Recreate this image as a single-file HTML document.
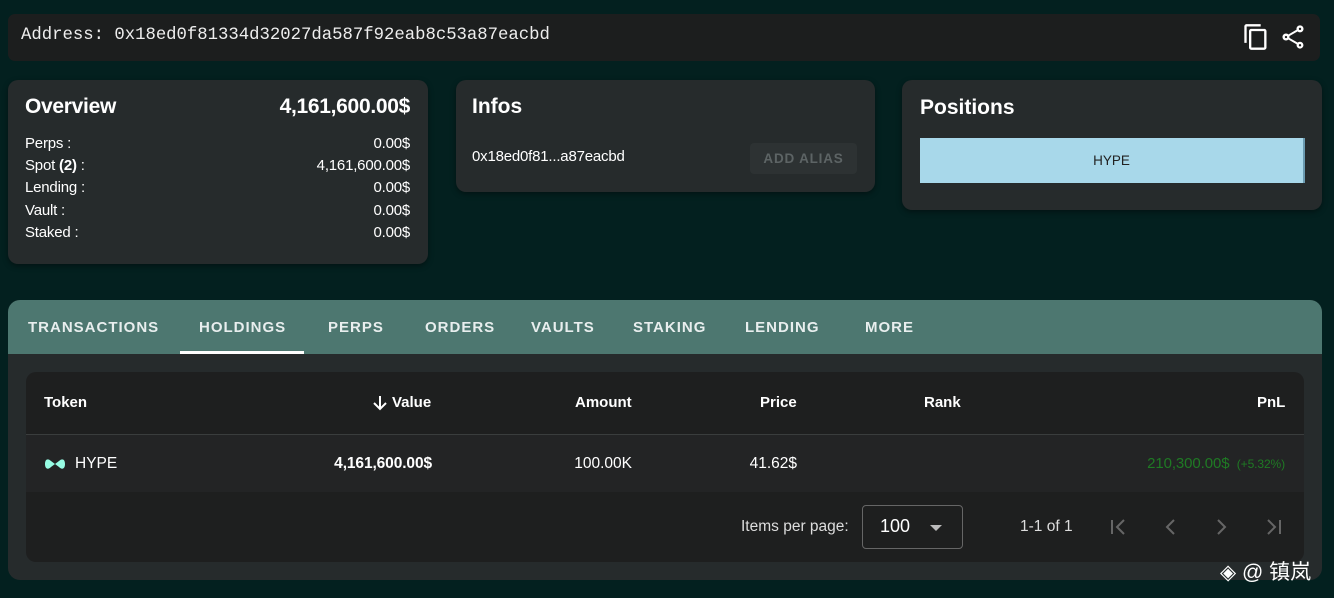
<!DOCTYPE html>
<html><head><meta charset="utf-8"><style>
*{box-sizing:border-box;margin:0;padding:0}
body{width:1334px;height:598px;background:#03201f;font-family:"Liberation Sans",sans-serif;color:#fff;position:relative;overflow:hidden}
.abs{position:absolute}
.card{position:absolute;background:#262b2c;border-radius:10px;box-shadow:0 2px 6px rgba(0,0,0,.4)}
.row{position:absolute;left:17px;right:18px;font-size:15px;display:flex;justify-content:space-between;letter-spacing:-.2px}
.tab{position:absolute;top:319px;font-size:15px;font-weight:bold;letter-spacing:1px;color:#e8eeee}
.th{position:absolute;top:394px;font-size:15px;font-weight:bold}
</style></head><body>
<div class="abs" style="left:8px;top:14px;width:1312px;height:47px;background:#1c1e1e;border-radius:7px"></div>
<div class="abs" style="left:21px;top:26px;font-family:'Liberation Mono',monospace;font-size:17.3px;color:#eee">Address: 0x18ed0f81334d32027da587f92eab8c53a87eacbd</div>
<svg class="abs" style="left:1242px;top:23px" width="28" height="28" viewBox="0 0 24 24" fill="#fff"><path d="M16 1H4c-1.1 0-2 .9-2 2v14h2V3h12V1zm3 4H8c-1.1 0-2 .9-2 2v14c0 1.1.9 2 2 2h11c1.1 0 2-.9 2-2V7c0-1.1-.9-2-2-2zm0 16H8V7h11v14z"/></svg>
<svg class="abs" style="left:1279px;top:23px" width="28" height="28" viewBox="0 0 24 24" fill="#fff"><path d="M18 16.08c-.76 0-1.44.3-1.960.77L8.910 12.7c.05-.23.09-.46.09-.7s-.04-.47-.09-.7l7.050-4.110c.54.5 1.250.81 2.040.81 1.660 0 3-1.340 3-3s-1.340-3-3-3-3 1.340-3 3c0 .24.04.47.09.7L8.040 9.810C7.5 9.310 6.790 9 6 9c-1.660 0-3 1.340-3 3s1.340 3 3 3c.79 0 1.5-.31 2.040-.81l7.120 4.160c-.05.21-.08.43-.08.65 0 1.610 1.310 2.920 2.920 2.920s2.920-1.310 2.920-2.920-1.310-2.920-2.920-2.920zM18 4c.55 0 1 .45 1 1s-.45 1-1 1-1-.45-1-1 .45-1 1-1zM6 13c-.55 0-1-.45-1-1s.45-1 1-1 1 .45 1 1-.45 1-1 1zm12 7.020c-.55 0-1-.45-1-1s.45-1 1-1 1 .45 1 1-.45 1-1 1z"/></svg>

<div class="card" style="left:8px;top:80px;width:420px;height:184px">
  <div class="abs" style="left:17px;top:15px;font-size:21px;font-weight:bold;letter-spacing:-.3px">Overview</div>
  <div class="abs" style="right:18px;top:15px;font-size:21px;font-weight:bold;letter-spacing:-.3px">4,161,600.00$</div>
  <div class="row" style="top:55px"><span>Perps :</span><span>0.00$</span></div>
  <div class="row" style="top:77px"><span>Spot <b>(2)</b> :</span><span>4,161,600.00$</span></div>
  <div class="row" style="top:99px"><span>Lending :</span><span>0.00$</span></div>
  <div class="row" style="top:122px"><span>Vault :</span><span>0.00$</span></div>
  <div class="row" style="top:144px"><span>Staked :</span><span>0.00$</span></div>
</div>
<div class="card" style="left:456px;top:80px;width:419px;height:112px">
  <div class="abs" style="left:16px;top:15px;font-size:21px;font-weight:bold">Infos</div>
  <div class="abs" style="left:16px;top:68px;font-size:15px;letter-spacing:-.2px">0x18ed0f81...a87eacbd</div>
  <div class="abs" style="left:294px;top:63px;width:107px;height:31px;background:#2d3233;border-radius:4px;color:#5d6465;font-size:13.5px;font-weight:bold;letter-spacing:.8px;text-align:center;line-height:31px">ADD ALIAS</div>
</div>
<div class="card" style="left:902px;top:80px;width:420px;height:130px">
  <div class="abs" style="left:18px;top:16px;font-size:21px;font-weight:bold">Positions</div>
  <div class="abs" style="left:18px;top:58px;width:385px;height:45px;background:#a8d8ea;color:#222;font-size:13.5px;text-align:center;line-height:45px;border-right:2px solid #6a9ab0">HYPE</div>
</div>

<div class="abs" style="left:8px;top:300px;width:1314px;height:280px;background:#262b2c;border-radius:12px;overflow:hidden">
  <div class="abs" style="left:0;top:0;width:1314px;height:54px;background:#4d7770"></div>
  <div class="abs" style="left:172px;top:51px;width:124px;height:3px;background:#fff"></div>
  <div class="abs" style="left:18px;top:72px;width:1278px;height:190px;background:#1e1f1f;border-radius:10px;overflow:hidden">
    <div class="abs" style="left:0;top:62px;width:1278px;height:1px;background:#3a3d3d"></div>
    <div class="abs" style="left:0;top:63px;width:1278px;height:57px;background:#232425"></div>
  </div>
</div>
<div class="tab" style="left:28px">TRANSACTIONS</div>
<div class="tab" style="left:199px">HOLDINGS</div>
<div class="tab" style="left:328px">PERPS</div>
<div class="tab" style="left:425px">ORDERS</div>
<div class="tab" style="left:531px">VAULTS</div>
<div class="tab" style="left:633px">STAKING</div>
<div class="tab" style="left:745px">LENDING</div>
<div class="tab" style="left:865px">MORE</div>

<div class="th" style="left:44px">Token</div>
<svg class="abs" style="left:371px;top:394px" width="18" height="18" viewBox="0 0 18 18"><path d="M9 2v13M3 9l6 6 6-6" stroke="#fff" stroke-width="2" fill="none"/></svg>
<div class="th" style="left:392px">Value</div>
<div class="th" style="left:575px">Amount</div>
<div class="th" style="left:760px">Price</div>
<div class="th" style="left:924px">Rank</div>
<div class="th" style="left:1257px">PnL</div>

<svg class="abs" style="left:44px;top:457px" width="22" height="14" viewBox="0 0 22 14"><path d="M1 7C1 2 4 1 7 4L11 7 15 4C18 1 21 2 21 7 21 12 18 13 15 10L11 7 7 10C4 13 1 12 1 7Z" fill="#97fce4"/></svg>
<div class="abs" style="left:75px;top:455px;font-size:15.5px">HYPE</div>
<div class="abs" style="right:902px;top:455px;font-size:15.5px;font-weight:bold;letter-spacing:-.1px">4,161,600.00$</div>
<div class="abs" style="right:702px;top:455px;font-size:15.5px">100.00K</div>
<div class="abs" style="right:537px;top:455px;font-size:15.5px">41.62$</div>
<div class="abs" style="right:49px;top:455px;font-size:15px;color:#1f7a24;letter-spacing:-.1px">210,300.00$ <span style="font-size:12px">&nbsp;(+5.32%)</span></div>

<div class="abs" style="left:741px;top:518px;font-size:15.5px;color:#ddd">Items per page:</div>
<div class="abs" style="left:862px;top:505px;width:101px;height:44px;border:1px solid #666;border-radius:4px"></div>
<div class="abs" style="left:880px;top:516px;font-size:18px">100</div>
<div class="abs" style="left:930px;top:525px;width:0;height:0;border-left:6px solid transparent;border-right:6px solid transparent;border-top:6px solid #bbb"></div>
<div class="abs" style="left:1020px;top:518px;font-size:15.5px;color:#ddd">1-1 of 1</div>
<svg class="abs" style="left:1108px;top:516px" width="180" height="22" viewBox="0 0 180 22" stroke="#666" stroke-width="2" fill="none"><path d="M4 4v14M16 4l-7 7 7 7"/><path d="M66 4l-7 7 7 7"/><path d="M110 4l7 7-7 7"/><path d="M160 4l7 7-7 7M172 4v14"/></svg>

<div class="abs" style="left:1220px;top:556px;font-size:21px;color:#fff;font-family:'Liberation Sans','Noto Sans CJK SC',sans-serif">◈ @ 镇岚</div>
</body></html>
